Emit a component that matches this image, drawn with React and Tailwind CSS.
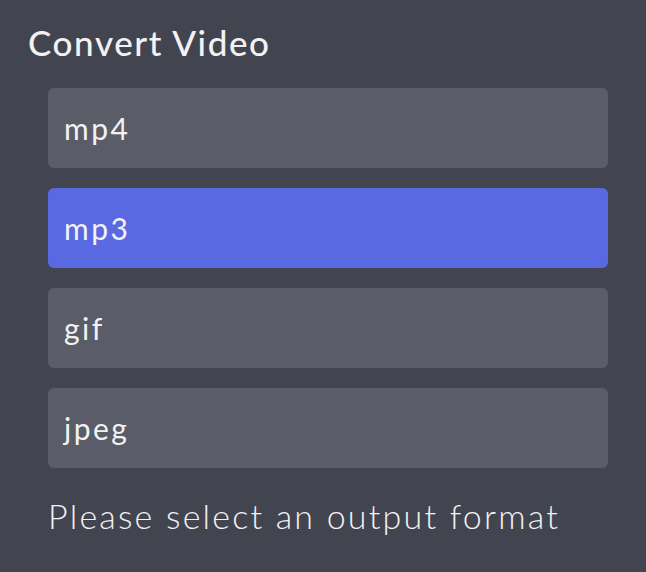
import { useState } from 'react';

const formats = ['mp4', 'mp3', 'gif', 'jpeg'];

export default function App() {
  const [selected, setSelected] = useState('mp3');

  return (
    <div className="min-h-screen w-full bg-[#424550] pl-7 pt-[22px] text-[#f2f2f4]" style={{ fontFamily: 'Lato, "Open Sans", sans-serif' }}>
      <h1 className="text-[35px] font-medium leading-[40px] tracking-[1.6px]">Convert Video</h1>
      <div className="ml-5 mt-[26px] flex w-[560px] flex-col gap-5">
        {formats.map((f) => (
          <button
            key={f}
            onClick={() => setSelected(f)}
            className={`flex h-20 items-center rounded-md px-4 text-left text-[30px] tracking-[2.5px] ${
              f === selected ? 'bg-[#5869e1]' : 'bg-[#5a5c67]'
            }`}
          >
            {f}
          </button>
        ))}
      </div>
      <p className="ml-5 mt-[26px] text-[34px] font-light leading-[44px] tracking-[2.2px]">Please select an output format</p>
    </div>
  );
}
